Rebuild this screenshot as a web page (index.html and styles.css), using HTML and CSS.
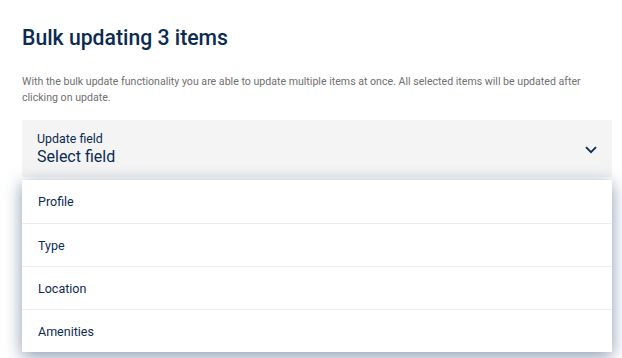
FILE: index.html
```html
<!DOCTYPE html>
<html lang="en">
<head>
  <meta charset="UTF-8" />
  <meta name="viewport" content="width=device-width, initial-scale=1.0"/>
  <title>Bulk update</title>
  <link rel="stylesheet" href="styles.css">
</head>
<body>
  <div class="panel">
    <h1 class="title">Bulk updating 3 items</h1>
    <p class="intro">With the bulk update functionality you are able to update multiple items at once. All selected items will be updated after clicking on update.</p>

    <div class="select">
      <div class="select-field">
        <div class="select-text">
          <span class="select-label">Update field</span>
          <span class="select-value">Select field</span>
        </div>
        <svg class="chevron" width="12" height="8" viewBox="0 0 12 8">
          <path d="M1 1.2 L6 6.2 L11 1.2" fill="none" stroke="#0b2b52" stroke-width="1.8"/>
        </svg>
      </div>
      <ul class="menu">
        <li>Profile</li>
        <li>Type</li>
        <li>Location</li>
        <li>Amenities</li>
      </ul>
    </div>
  </div>
</body>
</html>
```

FILE: styles.css
```css
* {
  box-sizing: border-box;
}

html, body {
  height: 100%;
  overflow: hidden;
}

body {
  margin: 0;
  font-family: Roboto, 'Noto Sans', sans-serif;
  background: #fff;
  color: #0b2b52;
}

.panel {
  padding: 22px 10px 0 22px;
}

.title {
  margin: 0;
  font-size: 21.2px;
  font-weight: 500;
  line-height: 32px;
  color: #0b2b52;
}

.intro {
  margin: 20px 0 0;
  font-size: 10.6px;
  line-height: 16px;
  color: #6f6f6f;
}

.select {
  margin-top: 14px;
}

.select-field {
  display: flex;
  align-items: center;
  justify-content: space-between;
  height: 57px;
  padding: 0 15px 0 15px;
  background: #f4f4f4;
}

.select-text {
  display: flex;
  flex-direction: column;
}

.select-label {
  font-size: 12.4px;
  line-height: 16px;
}

.select-value {
  font-size: 16px;
  line-height: 20px;
}

.chevron {
  margin-top: 2px;
}

.menu {
  list-style: none;
  margin: 3px 0 0;
  padding: 0;
  background: #fff;
  box-shadow: 0 4px 16px rgba(40, 70, 110, 0.55);
}

.menu li {
  height: 43px;
  padding: 0 16px;
  display: flex;
  align-items: center;
  font-size: 12.5px;
  border-top: 1px solid #ececec;
}

.menu li:first-child {
  border-top: none;
}
```
